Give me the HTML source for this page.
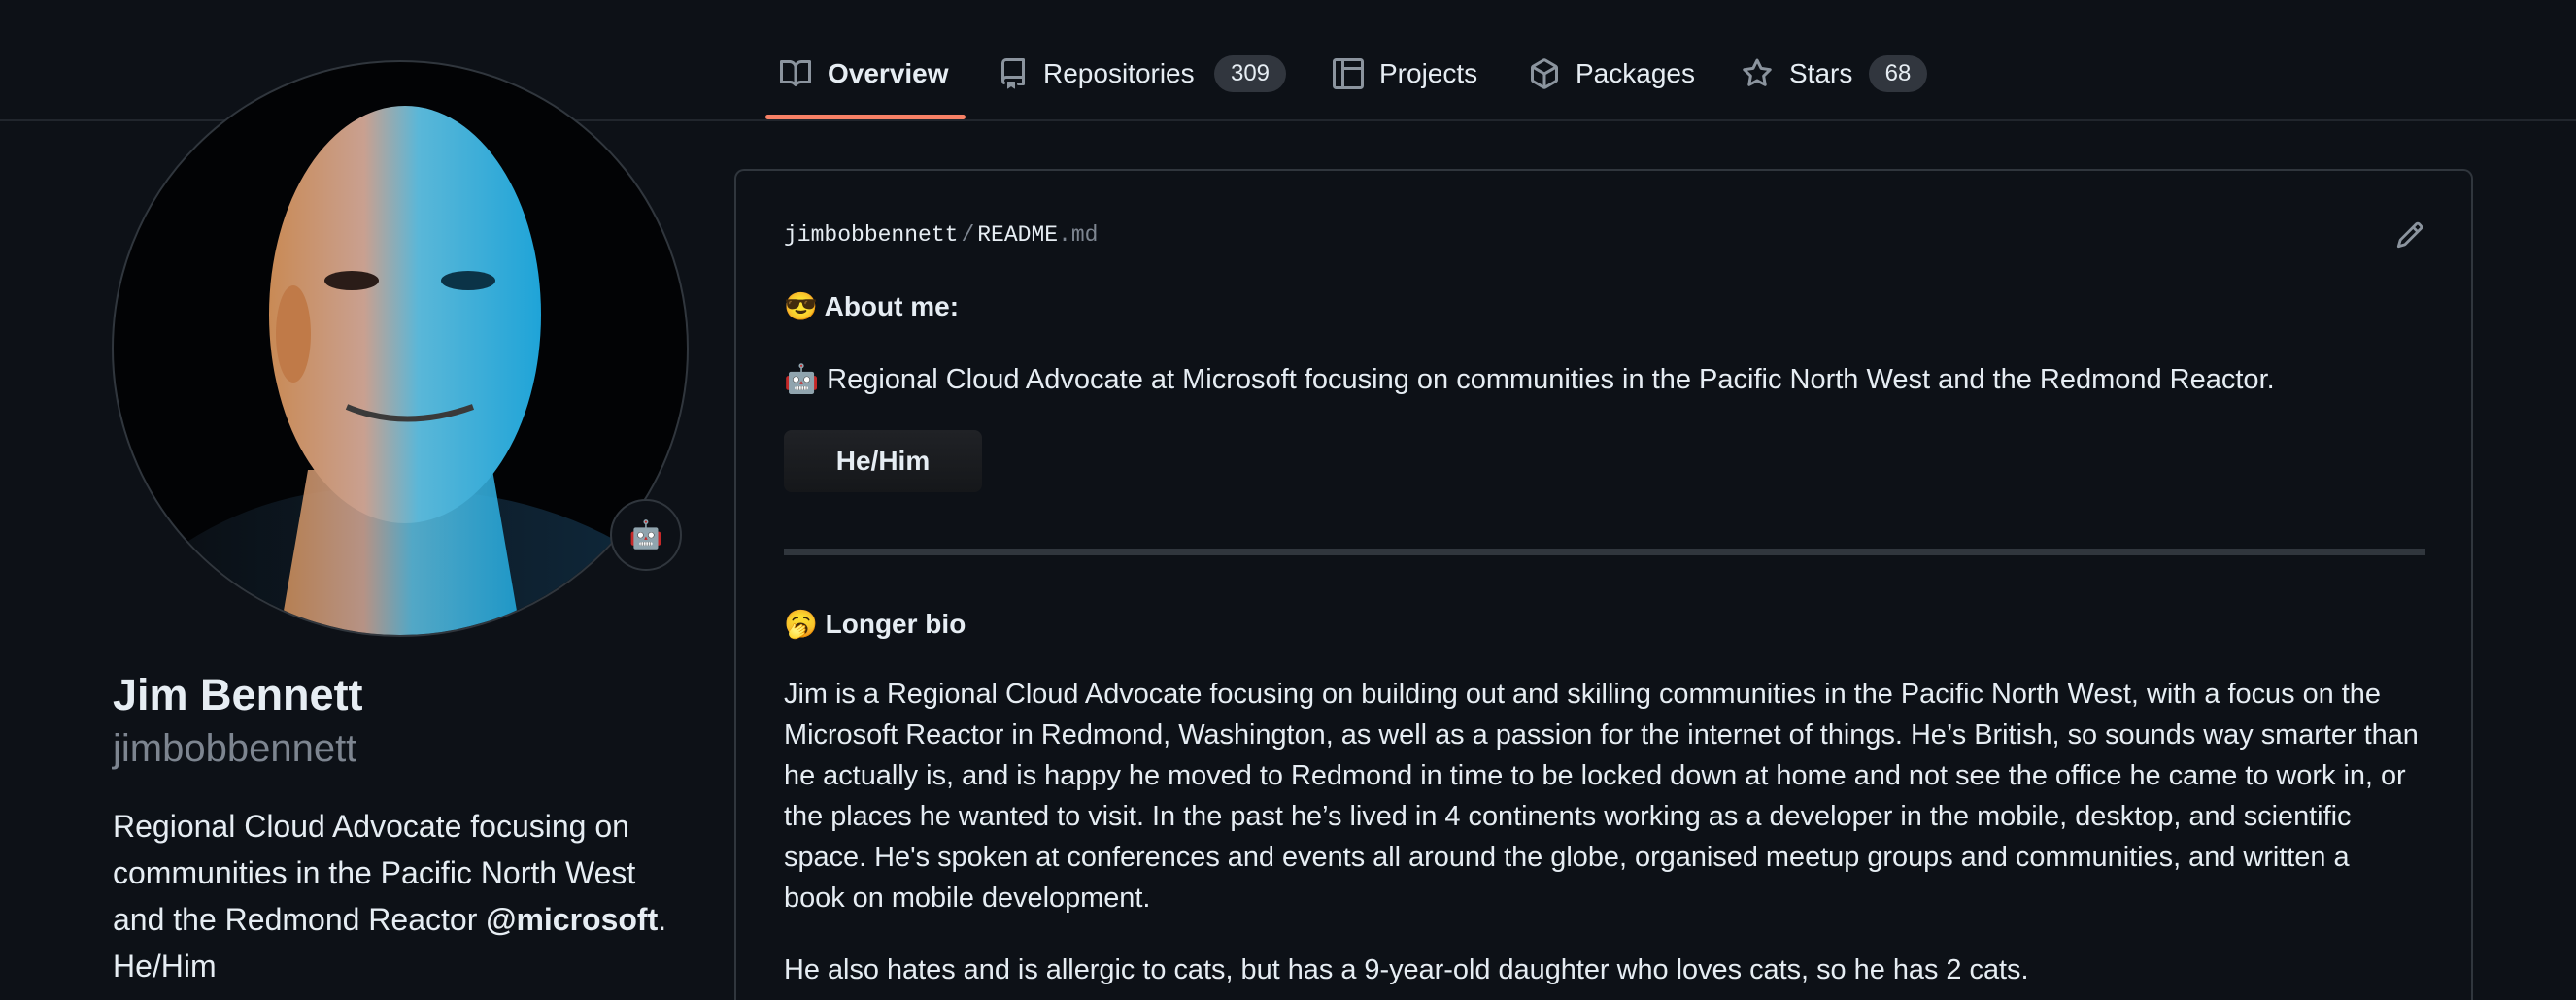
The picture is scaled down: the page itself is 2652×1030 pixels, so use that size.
<!DOCTYPE html>
<html style="overflow:hidden;width:2652px;height:1030px"><head><meta charset="utf-8"><style>
*{margin:0;padding:0;box-sizing:border-box}
body{width:2652px;height:1030px;background:#0d1117;color:#e6edf3;font-family:"Liberation Sans","Noto Sans CJK JP",sans-serif;position:relative;overflow:hidden}
.a{position:absolute;white-space:nowrap}
.nav{font-size:28px;color:#e6edf3;top:58px;line-height:36px}
.pill{position:absolute;top:57px;height:38px;border-radius:19px;background:#31363e;color:#e6edf3;font-size:24px;line-height:38px;text-align:center}
.ic{position:absolute;top:60px}
.p{font-size:29px;line-height:42px;left:807px}
</style></head><body>
<div class="a" style="left:0;top:123px;width:2652px;height:2px;background:#21262d"></div>
<div class="a" style="left:788px;top:118px;width:206px;height:5px;background:#f78166;border-radius:3px"></div>

<svg class="ic" style="left:803px" width="32" height="32" viewBox="0 0 16 16" fill="#8b949e"><path d="M0 1.75A.75.75 0 0 1 .75 1h4.253c1.227 0 2.317.59 3 1.501A3.743 3.743 0 0 1 11.006 1h4.245a.75.75 0 0 1 .75.75v10.5a.75.75 0 0 1-.75.75h-4.507a2.25 2.25 0 0 0-1.591.659l-.622.621a.75.75 0 0 1-1.060 0l-.622-.621A2.25 2.250 0 0 0 5.258 13H.75a.75.75 0 0 1-.75-.75Zm7.251 10.324.004-5.073-.002-2.253A2.25 2.25 0 0 0 5.003 2.5H1.5v9h3.757a3.75 3.75 0 0 1 1.994.574ZM8.755 4.75l-.004 7.322a3.752 3.752 0 0 1 1.992-.572H14.5v-9h-3.495a2.25 2.25 0 0 0-2.25 2.25Z"/></svg>
<div class="a nav" style="left:852px;font-weight:bold">Overview</div>
<svg class="ic" style="left:1027px" width="32" height="32" viewBox="0 0 16 16" fill="#8b949e"><path d="M2 2.5A2.5 2.5 0 0 1 4.5 0h8.75a.75.75 0 0 1 .75.75v12.5a.75.75 0 0 1-.75.75h-2.5a.75.75 0 0 1 0-1.5h1.750v-2h-8a1 1 0 0 0-.714 1.7.75.75 0 1 1-1.072 1.05A2.495 2.495 0 0 1 2 11.5Zm10.5-1h-8a1 1 0 0 0-1 1v6.708A2.486 2.486 0 0 1 4.5 9h8ZM5 12.25a.25.25 0 0 1 .25-.25h3.5a.25.25 0 0 1 .25.25v3.25a.25.25 0 0 1-.4.2l-1.45-1.087a.249.249 0 0 0-.3 0L5.4 15.7a.25.25 0 0 1-.4-.2Z"/></svg>
<div class="a nav" style="left:1074px">Repositories</div>
<div class="pill" style="left:1250px;width:74px">309</div>
<svg class="ic" style="left:1372px" width="32" height="32" viewBox="0 0 16 16" fill="#8b949e"><path d="M1.75 0h12.5C15.216 0 16 .784 16 1.75v12.5A1.75 1.75 0 0 1 14.25 16H1.75A1.75 1.75 0 0 1 0 14.25V1.75C0 .784.784 0 1.75 0ZM1.5 1.75v12.5c0 .138.112.25.25.25H4.5v-13H1.75a.25.25 0 0 0-.25.25ZM6 14.5h8.25a.25.25 0 0 0 .25-.25V6H6ZM14.5 4.5V1.75a.25.25 0 0 0-.25-.25H6v3Z"/></svg>
<div class="a nav" style="left:1420px">Projects</div>
<svg class="ic" style="left:1574px" width="32" height="32" viewBox="0 0 16 16" fill="#8b949e"><path d="m8.878.392 5.25 3.045c.54.314.872.89.872 1.514v6.098a1.75 1.75 0 0 1-.872 1.514l-5.25 3.045a1.75 1.75 0 0 1-1.756 0l-5.25-3.045A1.75 1.75 0 0 1 1 11.049V4.951c0-.624.332-1.201.872-1.514L7.122.392a1.75 1.75 0 0 1 1.756 0ZM7.875 1.69l-4.63 2.685L8 7.133l4.755-2.758-4.63-2.685a.248.248 0 0 0-.25 0ZM2.5 5.677v5.372c0 .09.047.171.125.216l4.625 2.683V8.432Zm6.25 8.271 4.625-2.683a.25.25 0 0 0 .125-.216V5.677L8.75 8.432Z"/></svg>
<div class="a nav" style="left:1622px">Packages</div>
<svg class="ic" style="left:1793px" width="32" height="32" viewBox="0 0 16 16" fill="#8b949e"><path d="M8 .25a.75.75 0 0 1 .673.418l1.882 3.815 4.21.612a.75.75 0 0 1 .416 1.279l-3.046 2.97.719 4.192a.751.751 0 0 1-1.088.791L8 12.347l-3.766 1.98a.75.75 0 0 1-1.088-.79l.72-4.194L.818 6.374a.75.75 0 0 1 .416-1.28l4.21-.611L7.327.668A.75.75 0 0 1 8 .25Zm0 2.445L6.615 5.5a.75.75 0 0 1-.564.41l-3.097.45 2.24 2.184a.75.75 0 0 1 .216.664l-.528 3.084 2.769-1.456a.75.75 0 0 1 .698 0l2.77 1.456-.53-3.084a.75.75 0 0 1 .216-.664l2.24-2.183-3.096-.45a.75.75 0 0 1-.564-.41L8 2.694Z"/></svg>
<div class="a nav" style="left:1842px">Stars</div>
<div class="pill" style="left:1924px;width:60px">68</div>

<!-- avatar -->
<div class="a" style="left:115px;top:62px;width:594px;height:594px;border-radius:50%;border:2px solid #30363d;overflow:hidden;background:#020305">
<svg width="594" height="594" viewBox="0 0 594 594">
<defs>
<linearGradient id="f" x1="0" x2="1" y1="0" y2="0"><stop offset="0" stop-color="#c98a55"/><stop offset="0.35" stop-color="#c9a090"/><stop offset="0.55" stop-color="#5ab7d8"/><stop offset="1" stop-color="#1fa4d8"/></linearGradient>
<linearGradient id="s" x1="0" x2="1"><stop offset="0" stop-color="#0a0c10"/><stop offset="1" stop-color="#0f2a3e"/></linearGradient>
</defs>
<path d="M40 520 Q150 430 297 440 Q450 440 560 520 L594 594 L0 594Z" fill="url(#s)"/>
<path d="M200 420 L390 420 L420 594 L170 594Z" fill="url(#f)" opacity="0.9"/>
<ellipse cx="300" cy="260" rx="140" ry="215" fill="url(#f)"/>
<ellipse cx="185" cy="280" rx="18" ry="50" fill="#c07a48"/>
<ellipse cx="245" cy="225" rx="28" ry="10" fill="#2a1c18"/>
<ellipse cx="365" cy="225" rx="28" ry="10" fill="#0b3347"/>
<path d="M240 355 Q300 380 370 355" stroke="#3a3a3a" stroke-width="6" fill="none"/>
</svg>
</div>
<div class="a" style="left:628px;top:514px;width:74px;height:74px;border-radius:50%;background:#0d1117;border:2px solid #30363d;font-size:28px;line-height:70px;text-align:center">🤖</div>

<div class="a" style="left:116px;top:688px;font-size:45px;font-weight:bold;line-height:56px">Jim Bennett</div>
<div class="a" style="left:116px;top:749px;font-size:40px;color:#7d8590;line-height:44px">jimbobbennett</div>
<div class="a" style="left:116px;top:827px;font-size:32px;line-height:48px">Regional Cloud Advocate focusing on<br>communities in the Pacific North West<br>and the Redmond Reactor <b>@microsoft</b>.<br>He/Him</div>

<!-- readme -->
<div class="a" style="left:756px;top:174px;width:1790px;height:856px;border:2px solid #30363d;border-bottom:none;border-radius:10px 10px 0 0"></div>
<div class="a" style="left:807px;top:228px;font-family:'Liberation Mono',monospace;font-size:23px;line-height:28px;color:#e6edf3">jimbobbennett<span style="color:#7d8590;margin:0 3px">/</span>README<span style="color:#7d8590">.md</span></div>
<svg class="a" style="left:2466px;top:227px" width="30" height="30" viewBox="0 0 16 16" fill="#8b949e"><path d="M11.013 1.427a1.75 1.75 0 0 1 2.474 0l1.086 1.086a1.75 1.75 0 0 1 0 2.474l-8.61 8.61c-.21.21-.47.364-.756.445l-3.251.93a.75.75 0 0 1-.927-.928l.929-3.250c.081-.286.235-.547.445-.758l8.61-8.610Zm.176 4.823L9.75 4.81l-6.286 6.287a.253.253 0 0 0-.064.108l-.558 1.953 1.953-.558a.253.253 0 0 0 .108-.064Zm1.238-3.763a.25.25 0 0 0-.354 0L10.811 3.75l1.439 1.44 1.263-1.263a.25.25 0 0 0 0-.354Z"/></svg>
<div class="a p" style="top:295px;font-weight:bold;font-size:28px">😎 About me:</div>
<div class="a p" style="top:370px">🤖 Regional Cloud Advocate at Microsoft focusing on communities in the Pacific North West and the Redmond Reactor.</div>
<div class="a" style="left:807px;top:443px;width:204px;height:64px;border-radius:8px;background:linear-gradient(#202226,#15171a);font-size:28px;font-weight:bold;line-height:64px;text-align:center">He/Him</div>
<div class="a" style="left:807px;top:565px;width:1690px;height:7px;background:#30363d"></div>
<div class="a p" style="top:622px;font-weight:bold;font-size:28px">🥱 Longer bio</div>
<div class="a p" style="top:694px;font-size:28.9px">Jim is a Regional Cloud Advocate focusing on building out and skilling communities in the Pacific North West, with a focus on the<br>Microsoft Reactor in Redmond, Washington, as well as a passion for the internet of things. He’s British, so sounds way smarter than<br>he actually is, and is happy he moved to Redmond in time to be locked down at home and not see the office he came to work in, or<br>the places he wanted to visit. In the past he’s lived in 4 continents working as a developer in the mobile, desktop, and scientific<br>space. He's spoken at conferences and events all around the globe, organised meetup groups and communities, and written a<br>book on mobile development.</div>
<div class="a p" style="top:978px;font-size:28.9px">He also hates and is allergic to cats, but has a 9-year-old daughter who loves cats, so he has 2 cats.</div>
</body></html>
